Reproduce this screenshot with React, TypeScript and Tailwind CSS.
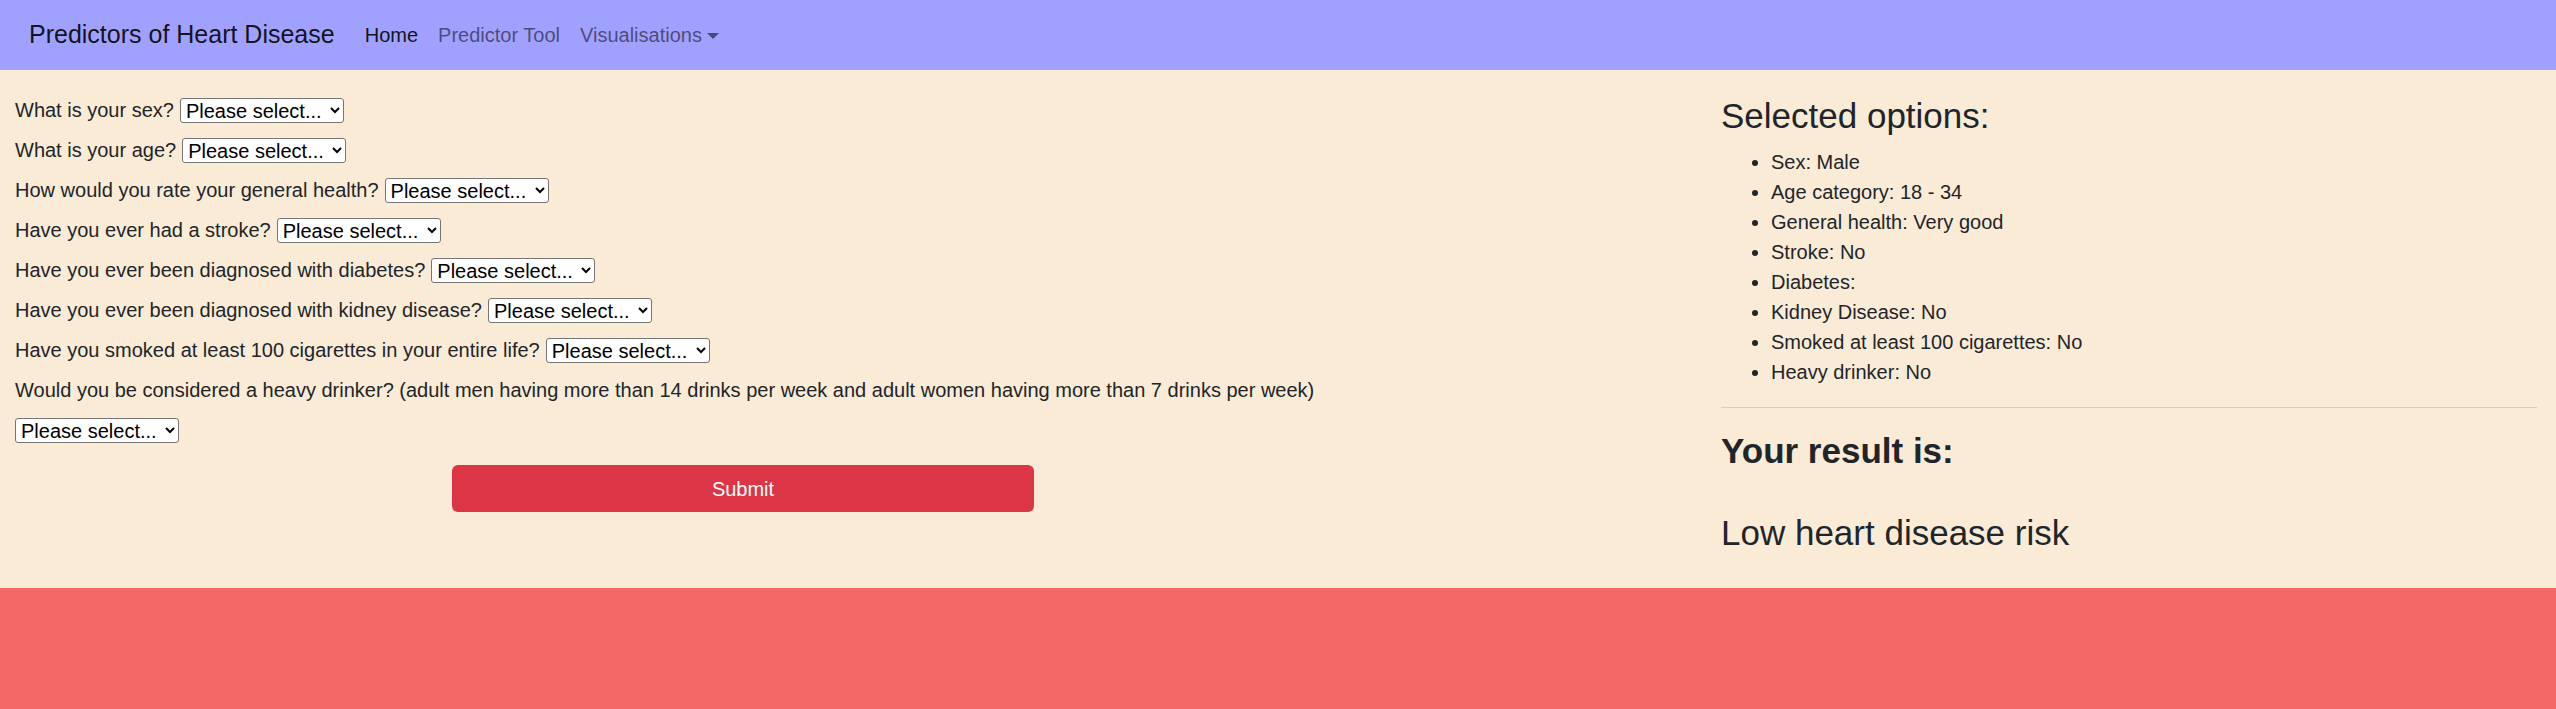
import { useState } from 'react';

const questions = [
  { id: 'sex', label: 'What is your sex?' },
  { id: 'age', label: 'What is your age?' },
  { id: 'health', label: 'How would you rate your general health?' },
  { id: 'stroke', label: 'Have you ever had a stroke?' },
  { id: 'diabetes', label: 'Have you ever been diagnosed with diabetes?' },
  { id: 'kidney', label: 'Have you ever been diagnosed with kidney disease?' },
  { id: 'smoking', label: 'Have you smoked at least 100 cigarettes in your entire life?' },
];

const selected = [
  'Sex: Male',
  'Age category: 18 - 34',
  'General health: Very good',
  'Stroke: No',
  'Diabetes:',
  'Kidney Disease: No',
  'Smoked at least 100 cigarettes: No',
  'Heavy drinker: No',
];

function Select({ value, onChange }: { value: string; onChange: (v: string) => void }) {
  return (
    <select
      value={value}
      onChange={(e) => onChange(e.target.value)}
      className="h-[25px] pl-[1px] pr-[5px] bg-white text-black border border-[#767676] rounded-[3px] leading-[23px] text-[20px]"
    >
      <option value="">Please select...</option>
      <option value="yes">Yes</option>
      <option value="no">No</option>
    </select>
  );
}

export default function App() {
  const [answers, setAnswers] = useState<Record<string, string>>({});
  const set = (id: string) => (v: string) => setAnswers((a) => ({ ...a, [id]: v }));

  return (
    <div
      className="min-h-screen flex flex-col text-[#212529] text-[20px]"
      style={{ fontFamily: '"Liberation Sans", Arial, sans-serif' }}
    >
      {/* Navbar */}
      <nav className="h-[70px] bg-[#a0a0fe] flex items-center pl-[29px]">
        <span className="text-[25px] text-black/90 mr-[20px]">Predictors of Heart Disease</span>
        <a className="px-[10px] text-black/90">Home</a>
        <a className="px-[10px] text-black/55">Predictor Tool</a>
        <a className="px-[10px] text-black/55 flex items-center">
          Visualisations
          <span className="inline-block ml-[5px] mt-[2px] border-t-[6px] border-x-[6px] border-b-0 border-x-transparent border-t-current" />
        </a>
      </nav>

      {/* Main */}
      <div className="bg-[#faebd7] flex">
        <div className="w-[1704px] px-[15px] pt-[25px]">
          <div className="flex flex-col gap-[10px]">
            {questions.map((q) => (
              <div key={q.id} className="h-[30px] flex items-center gap-[6px]">
                <span className="leading-[30px]">{q.label}</span>
                <Select value={answers[q.id] ?? ''} onChange={set(q.id)} />
              </div>
            ))}
            <div className="h-[30px] leading-[30px]">
              Would you be considered a heavy drinker? (adult men having more than 14 drinks per week and adult women
              having more than 7 drinks per week)
            </div>
            <div className="h-[30px] flex items-center">
              <Select value={answers.drinker ?? ''} onChange={set('drinker')} />
            </div>
          </div>
          <button className="mt-[20px] ml-[437px] w-[582px] h-[47px] rounded-[6px] bg-[#dc3545] text-white text-[20px]">
            Submit
          </button>
        </div>

        <div className="flex-1 pl-[17px] pr-[19px] pt-[25px] pb-[34px]">
          <h3 className="text-[35px] leading-[42px] mb-[10px]">Selected options:</h3>
          <ul className="list-disc pl-[50px] leading-[30px] mb-[20px]">
            {selected.map((s) => (
              <li key={s}>{s}</li>
            ))}
          </ul>
          <hr className="border-t border-[#d9cfc2]" />
          <h3 className="mt-[22px] text-[35px] leading-[42px] font-bold">Your result is:</h3>
          <h3 className="mt-[40px] text-[35px] leading-[42px]">Low heart disease risk</h3>
        </div>
      </div>

      {/* Footer */}
      <div className="flex-1 bg-[#f46868]" />
    </div>
  );
}
